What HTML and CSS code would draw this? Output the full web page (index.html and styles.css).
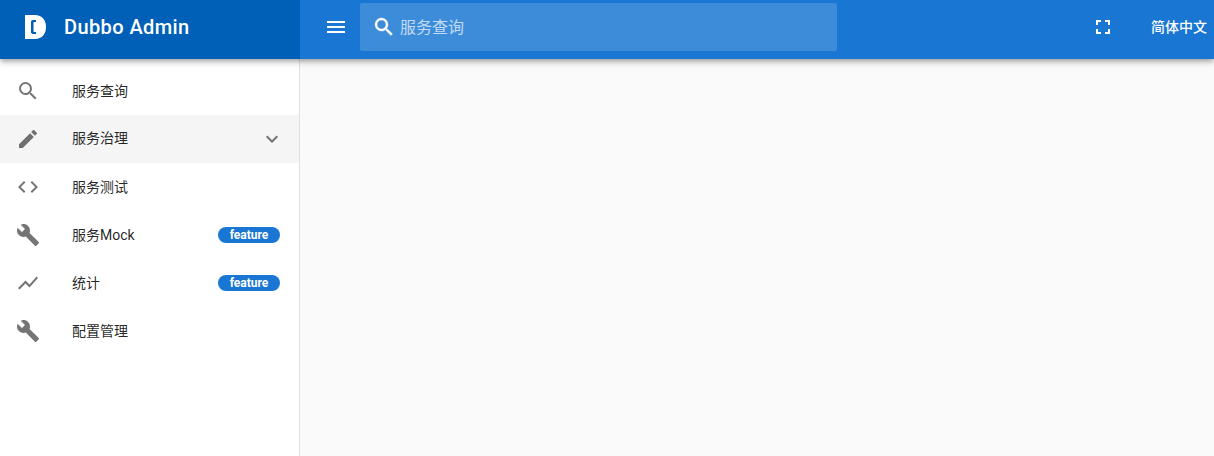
FILE: index.html
```html
<!DOCTYPE html>
<html lang="zh-CN">
<head>
  <meta charset="UTF-8">
  <title>Dubbo Admin</title>
  <link rel="stylesheet" href="styles.css">
</head>
<body>
  <header class="toolbar">
    <div class="brand">
      <svg class="logo" viewBox="0 0 21 24" width="21" height="24">
        <path fill="#fff" d="M0 0h10c7 0 11 5 11 12s-4 12-11 12H0z"/>
        <path fill="#005fb6" d="M11 5H8C6.800 5 6 5.800 6 7v10c0 1.200.8 2 2 2h3v-2H9.200c-.5 0-.7-.2-.7-.7V7.700c0-.5.2-.7.7-.7H11z"/>
      </svg>
      <span class="brand-name">Dubbo Admin</span>
    </div>
    <div class="bar">
      <svg class="icon menu-btn" viewBox="0 0 24 24"><path d="M3 18h18v-2H3v2zm0-5h18v-2H3v2zm0-7v2h18V6H3z"/></svg>
      <div class="search">
        <svg class="icon search-icon" viewBox="0 0 24 24"><path d="M15.500 14h-.79l-.28-.27A6.471 6.471 0 0 0 16 9.500 6.500 6.500 0 1 0 9.500 16c1.610 0 3.090-.59 4.230-1.570l.27.28v.79l5 4.990L20.490 19l-4.990-5zm-6 0C7.010 14 5 11.990 5 9.500S7.010 5 9.500 5 14 7.010 14 9.500 11.990 14 9.500 14z"/></svg>
        <span class="search-text">服务查询</span>
      </div>
      <svg class="icon fullscreen" viewBox="0 0 24 24"><path d="M7 14H5v5h5v-2H7v-3zm-2-4h2V7h3V5H5v5zm12 7h-3v2h5v-5h-2v3zM14 5v2h3v3h2V5h-5z"/></svg>
      <span class="lang">简体中文</span>
    </div>
  </header>

  <div class="content">
    <nav class="sidebar">
      <a class="nav-item">
        <svg class="icon" viewBox="0 0 24 24"><path d="M15.500 14h-.79l-.28-.27A6.471 6.471 0 0 0 16 9.500 6.500 6.500 0 1 0 9.500 16c1.610 0 3.090-.59 4.230-1.570l.27.28v.79l5 4.990L20.490 19l-4.990-5zm-6 0C7.010 14 5 11.990 5 9.500S7.010 5 9.500 5 14 7.010 14 9.500 11.990 14 9.500 14z"/></svg>
        <span class="nav-label">服务查询</span>
      </a>
      <a class="nav-item active">
        <svg class="icon" viewBox="0 0 24 24"><path d="M3 17.250V21h3.750L17.810 9.940l-3.750-3.750L3 17.250zM20.710 7.040c.39-.39.39-1.020 0-1.410l-2.340-2.340c-.39-.39-1.020-.39-1.410 0l-1.830 1.830 3.750 3.750 1.830-1.830z"/></svg>
        <span class="nav-label">服务治理</span>
        <svg class="icon chevron" viewBox="0 0 24 24"><path d="M16.590 8.590L12 13.170 7.410 8.590 6 10l6 6 6-6z"/></svg>
      </a>
      <a class="nav-item">
        <svg class="icon" viewBox="0 0 24 24"><path d="M9.400 16.600L4.800 12l4.600-4.600L8 6l-6 6 6 6 1.400-1.400zm5.200 0l4.600-4.600-4.600-4.600L16 6l6 6-6 6-1.400-1.400z"/></svg>
        <span class="nav-label">服务测试</span>
      </a>
      <a class="nav-item">
        <svg class="icon" viewBox="0 0 24 24"><path d="M22.700 19l-9.100-9.100c.9-2.300.4-5-1.500-6.900-2-2-5-2.400-7.400-1.300L9 6 6 9 1.600 4.700C.4 7.100.9 10.100 2.900 12.100c1.900 1.900 4.600 2.400 6.900 1.500l9.100 9.100c.4.400 1 .4 1.400 0l2.300-2.300c.5-.4.5-1.100.1-1.400z"/></svg>
        <span class="nav-label">服务Mock</span>
        <span class="badge">feature</span>
      </a>
      <a class="nav-item">
        <svg class="icon" viewBox="0 0 24 24"><path d="M3.500 18.490l6-6.010 4 4L22 6.920l-1.410-1.410-7.090 7.970-4-4L2 16.990z"/></svg>
        <span class="nav-label">统计</span>
        <span class="badge">feature</span>
      </a>
      <a class="nav-item">
        <svg class="icon" viewBox="0 0 24 24"><path d="M22.700 19l-9.100-9.100c.9-2.300.4-5-1.500-6.900-2-2-5-2.400-7.400-1.300L9 6 6 9 1.600 4.700C.4 7.100.9 10.100 2.900 12.100c1.900 1.900 4.600 2.400 6.900 1.500l9.100 9.100c.4.400 1 .4 1.400 0l2.300-2.300c.5-.4.500-1.100.1-1.400z"/></svg>
        <span class="nav-label">配置管理</span>
      </a>
    </nav>
    <main class="main"></main>
  </div>
</body>
</html>
```

FILE: styles.css
```css
html, body {
  height: 100%;
}
body {
  margin: 0;
  display: flex;
  flex-direction: column;
  overflow: hidden;
  font-family: Roboto, "Noto Sans CJK SC", sans-serif;
  font-size: 14px;
  color: rgba(0,0,0,0.87);
  background: #fafafa;
}
.icon {
  display: block;
  width: 24px;
  height: 24px;
  flex: none;
  fill: currentColor;
}

.toolbar {
  position: relative;
  z-index: 2;
  display: flex;
  flex: none;
  height: 59px;
  color: #fff;
  box-shadow: 0 2px 4px -1px rgba(0,0,0,0.2), 0 4px 5px 0 rgba(0,0,0,0.14), 0 1px 10px 0 rgba(0,0,0,0.12);
}
.brand {
  display: flex;
  align-items: center;
  width: 300px;
  padding-left: 25px;
  padding-bottom: 5px;
  box-sizing: border-box;
  background: #005fb6;
}
.brand-name {
  margin-left: 18px;
  font-size: 20px;
  font-weight: 500;
  letter-spacing: 0.02em;
}
.bar {
  display: flex;
  flex: 1;
  align-items: flex-start;
  background: #1976d2;
}
.menu-btn {
  margin: 15px 12px 0 24px;
}
.search {
  display: flex;
  align-items: center;
  width: 477px;
  height: 48px;
  margin-top: 3px;
  padding-left: 12px;
  box-sizing: border-box;
  border-radius: 2px;
  background: rgba(255,255,255,0.16);
}
.search-icon {
  stroke: currentColor;
  stroke-width: 0.4;
}
.search-text {
  margin-left: 4px;
  margin-bottom: 3px;
  font-size: 16px;
  color: rgba(255,255,255,0.7);
}
.fullscreen {
  margin: 15px 0 0 254px;
}
.lang {
  margin: 17px 0 0 36px;
  line-height: 20px;
  font-size: 14px;
  font-weight: 500;
}

.content {
  display: flex;
  flex: 1;
  min-height: 0;
}
.sidebar {
  width: 300px;
  padding-top: 8px;
  box-sizing: border-box;
  border-right: 1px solid rgba(0,0,0,0.12);
  background: #fff;
}
.nav-item {
  display: flex;
  align-items: center;
  height: 48px;
  padding: 0 19px 0 16px;
  color: rgba(0,0,0,0.54);
}
.nav-item.active {
  background: rgba(0,0,0,0.04);
}
.nav-label {
  flex: 1;
  margin-left: 32px;
  margin-bottom: 2px;
  font-size: 14px;
  color: rgba(0,0,0,0.87);
}
.nav-item.active .nav-label {
  margin-bottom: 4px;
}
.chevron {
  margin-right: -4px;
}
.badge {
  width: 62px;
  height: 16px;
  border-radius: 8px;
  background: #1976d2;
  color: #fff;
  font-size: 12px;
  font-weight: 700;
  line-height: 16px;
  text-align: center;
}
.main {
  flex: 1;
}
```
